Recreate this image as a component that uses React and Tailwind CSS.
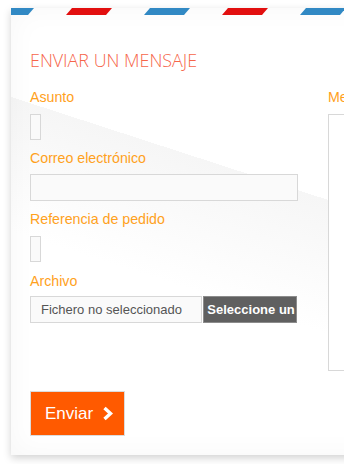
import React from "react";

function Stripes() {
  const starts = [-23, 55, 133, 211, 289, 367];
  return (
    <svg width="380" height="7" className="block" viewBox="0 0 380 7">
      {starts.map((x, i) => (
        <polygon
          key={i}
          points={`${x},7 ${x + 40},7 ${x + 46},0 ${x + 6},0`}
          fill={i % 2 === 0 ? "#3189c4" : "#e20f0f"}
        />
      ))}
    </svg>
  );
}

export default function App() {
  return (
    <div className="w-[344px] h-[464px] overflow-hidden bg-white pl-[11px] pt-[8px]">
      <div className="w-[380px] h-[447px] bg-[linear-gradient(198deg,#ffffff_202px,#f6f6f6_202px,#ffffff_330px)] shadow-[0_3px_8px_rgba(0,0,0,0.18),inset_0_0_30px_rgba(0,0,0,0.035)]">
        <Stripes />
        <div className="pl-[19px] pt-[33px] font-['Liberation_Sans',Arial,sans-serif]">
          <h1 className="font-['Open_Sans',sans-serif] font-light text-[17.9px] leading-[24px] text-[#f6654a]">
            ENVIAR UN MENSAJE
          </h1>
          <div className="flex mt-[15px]">
            <div className="w-[267px] flex flex-col">
              <label className="text-[14.2px] leading-[20px] text-[#ffa11c]">Asunto</label>
              <div className="mt-[7px] w-[11px] h-[26px] border border-[#d8d8d8] bg-[#fafafa]" />
              <label className="mt-[8px] text-[14.2px] leading-[20px] text-[#ffa11c]">Correo electrónico</label>
              <div className="mt-[6px] w-[268px] h-[27px] border border-[#d8d8d8] bg-[#fafafa]" />
              <label className="mt-[8px] text-[14.2px] leading-[20px] text-[#ffa11c]">Referencia de pedido</label>
              <div className="mt-[7px] w-[11px] h-[26px] border border-[#d8d8d8] bg-[#fafafa]" />
              <label className="mt-[9px] text-[14.2px] leading-[20px] text-[#ffa11c]">Archivo</label>
              <div className="mt-[5px] flex items-stretch h-[27px]">
                <div className="w-[173px] border border-[#d8d8d8] bg-[#fafafa] text-[13px] leading-[25px] text-[#555555] pl-[10px] whitespace-nowrap overflow-hidden">
                  Fichero no seleccionado
                </div>
                <div className="ml-[1px] w-[94px] border border-[#8c8c8c] bg-[#606060] overflow-hidden whitespace-nowrap text-white font-bold text-[13px] leading-[25px] pl-[3px]">
                  Seleccione un
                </div>
              </div>
              <button className="mt-[68px] w-[95px] h-[45px] border border-[#dcdcdc] bg-[#ff5a00] text-white text-[17px] flex items-center pl-[14px] gap-[9px]">
                <span>Enviar</span>
                <svg width="12" height="15" viewBox="0 0 12 15" className="mt-[-1px]">
                  <path d="M2.5 2 L8.5 7.5 L2.5 13" fill="none" stroke="white" strokeWidth="3.4" strokeLinejoin="miter" strokeLinecap="butt" />
                </svg>
              </button>
            </div>
            <div className="ml-[31px] w-[80px] flex flex-col">
              <label className="text-[14.2px] leading-[20px] text-[#ffa11c] whitespace-nowrap">Mensaje</label>
              <div className="mt-[7px] w-[80px] h-[257px] border border-[#d8d8d8] bg-white" />
            </div>
          </div>
        </div>
      </div>
    </div>
  );
}
